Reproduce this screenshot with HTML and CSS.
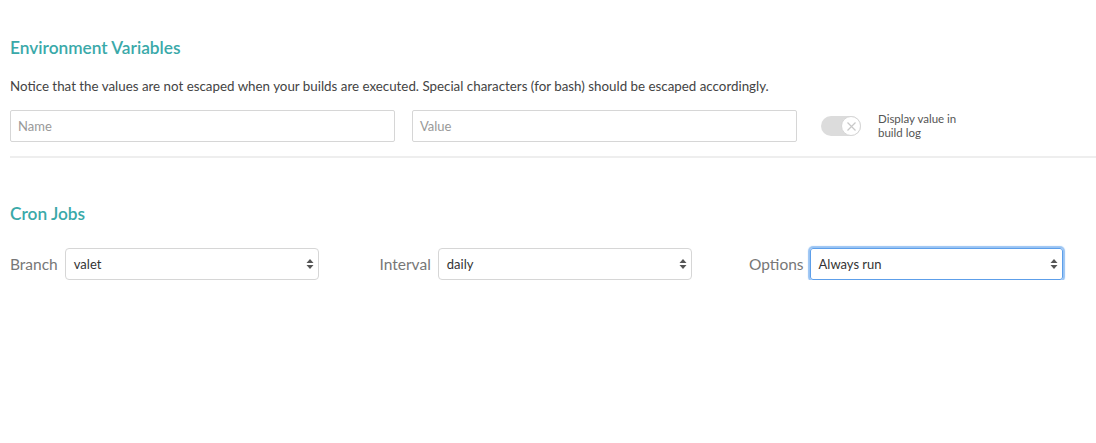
FILE: index.html
```html
<!DOCTYPE html>
<html>
<head>
<meta charset="utf-8">
<link rel="stylesheet" href="styles.css">
</head>
<body>
<div class="page">
  <section class="env">
    <h2 class="title">Environment Variables</h2>
    <p class="notice">Notice that the values are not escaped when your builds are executed. Special characters (for bash) should be escaped accordingly.</p>
    <div class="env-row">
      <div class="input"><span class="placeholder">Name</span></div>
      <div class="input"><span class="placeholder">Value</span></div>
      <div class="toggle-wrap">
        <div class="toggle">
          <div class="knob">
            <svg width="17" height="17" viewBox="0 0 17 17"><path d="M4.5 4.5 L12.5 12.5 M12.5 4.5 L4.5 12.5" stroke="#c8c8c8" stroke-width="1.2" fill="none"/></svg>
          </div>
        </div>
        <div class="toggle-label">Display value in<br>build log</div>
      </div>
    </div>
  </section>
  <hr class="divider">
  <section class="cron">
    <h2 class="title">Cron Jobs</h2>
    <div class="cron-row">
      <div class="field">
        <span class="label">Branch</span>
        <div class="select"><span>valet</span><svg class="arrows" width="8" height="12" viewBox="0 0 8 12"><path d="M4 1 L7.5 5 H0.5 Z M4 11 L7.5 7 H0.5 Z" fill="#555"/></svg></div>
      </div>
      <div class="field">
        <span class="label">Interval</span>
        <div class="select"><span>daily</span><svg class="arrows" width="8" height="12" viewBox="0 0 8 12"><path d="M4 1 L7.5 5 H0.5 Z M4 11 L7.5 7 H0.5 Z" fill="#555"/></svg></div>
      </div>
      <div class="field">
        <span class="label label-tight">Options</span>
        <div class="select focused"><span>Always run</span><svg class="arrows" width="8" height="12" viewBox="0 0 8 12"><path d="M4 1 L7.5 5 H0.5 Z M4 11 L7.5 7 H0.5 Z" fill="#555"/></svg></div>
      </div>
    </div>
  </section>
</div>
</body>
</html>
```
FILE: styles.css
```css
html, body {
  margin: 0;
  padding: 0;
  background: #fff;
}
body {
  font-family: Lato, "Open Sans", sans-serif;
  color: #444;
}
.page {
  padding: 37px 0 0 10px;
}
.title {
  margin: 0;
  font-size: 17.3px;
  font-weight: 600;
  color: #3aa9a9;
  line-height: 22px;
}
.notice {
  margin: 19px 0 0;
  font-size: 13.35px;
  line-height: 17px;
  color: #444;
}
.env-row {
  display: flex;
  align-items: center;
  margin-top: 15px;
}
.input {
  box-sizing: border-box;
  width: 385px;
  height: 32px;
  border: 1px solid #d6d6d6;
  border-radius: 2px;
  display: flex;
  align-items: center;
  padding-left: 7px;
  margin-right: 17px;
}
.placeholder {
  font-size: 13px;
  color: #999;
}
.toggle-wrap {
  display: flex;
  align-items: center;
  margin-left: 7px;
}
.toggle {
  width: 40px;
  height: 20px;
  border-radius: 10px;
  background: #dcdcdc;
  display: flex;
  justify-content: flex-end;
  align-items: center;
}
.knob {
  box-sizing: border-box;
  width: 20px;
  height: 20px;
  border-radius: 50%;
  background: #fff;
  border: 1px solid #d6d6d6;
  display: flex;
  align-items: center;
  justify-content: center;
}
.knob svg {
  display: block;
}
.toggle-label {
  margin-left: 17px;
  font-size: 11.5px;
  line-height: 14px;
  color: #555;
}
.divider {
  border: 0;
  height: 2px;
  background: #eeeeee;
  margin: 14px 0 0;
}
.cron {
  margin-top: 45px;
}
.cron-row {
  display: grid;
  grid-template-columns: repeat(3, 369.5px);
  margin-top: 23px;
}
.field {
  display: flex;
  align-items: center;
}
.label {
  font-size: 15.5px;
  color: #777;
  margin-right: 7px;
}
.label-tight {
  margin-right: 6px;
}
.select {
  box-sizing: border-box;
  width: 254px;
  height: 32px;
  border: 1px solid #d6d6d6;
  border-radius: 4px;
  display: flex;
  align-items: center;
  justify-content: space-between;
  padding: 0 4px 0 8px;
  font-size: 13px;
  color: #333;
}
.arrows {
  display: block;
}
.select.focused {
  width: 253px;
  border: 1px solid #5d9fea;
  box-shadow: 0 0 1px 2px #98c3f3;
  border-radius: 3px;
}
```
